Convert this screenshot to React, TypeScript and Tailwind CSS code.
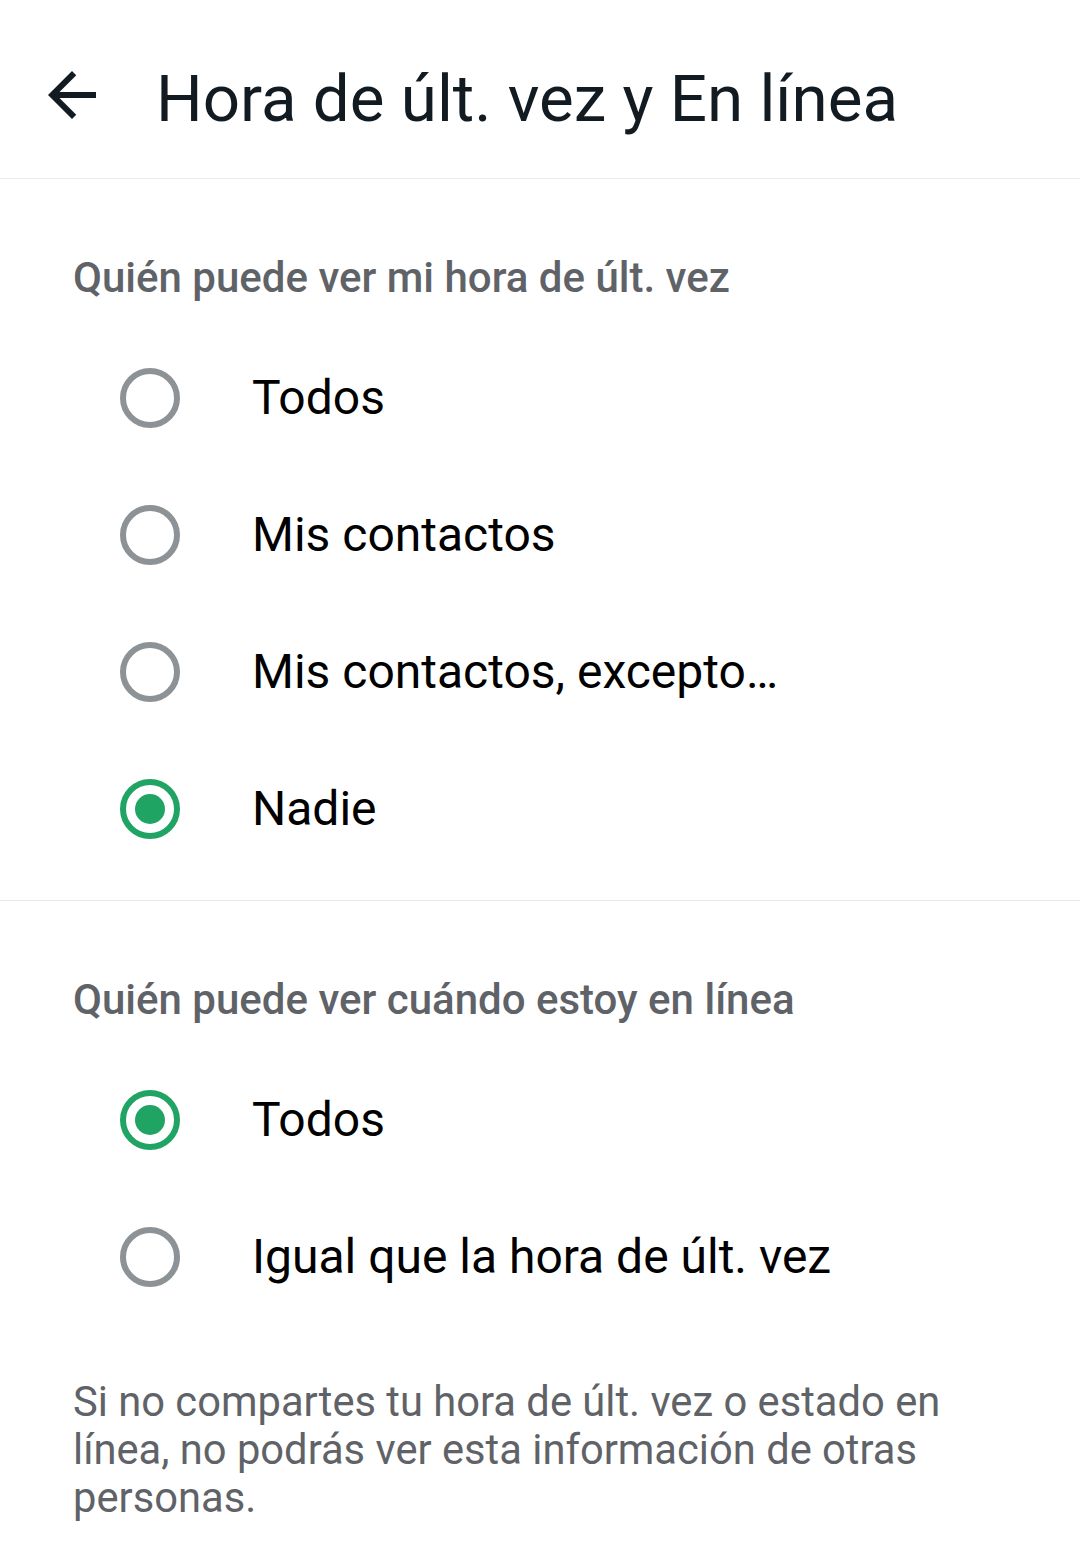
export default function App() {
  const font = { fontFamily: "Roboto, 'Noto Sans', sans-serif" }
  return (
    <div className="w-[1080px] h-[1568px] bg-white overflow-hidden" style={font}>
      {/* header */}
      <div className="h-[179px] flex items-center border-b border-[#e9ebec]">
        <div className="w-[156px] h-full flex items-center pl-[36px] pt-[12px]">
          <svg width="72" height="72" viewBox="0 0 24 24" fill="#111b21">
            <path d="M20 11H7.83l5.59-5.59L12 4l-8 8 8 8 1.41-1.41L7.83 13H20v-2z" />
          </svg>
        </div>
        <h1 className="text-[65.5px] leading-none text-[#111b21] pt-[20px]">Hora de últ. vez y En línea</h1>
      </div>

      <Section
        title="Quién puede ver mi hora de últ. vez"
        options={["Todos", "Mis contactos", "Mis contactos, excepto…", "Nadie"]}
        selected={3}
      />
      <div className="h-px bg-[#e5e7e8]" />
      <Section
        title="Quién puede ver cuándo estoy en línea"
        options={["Todos", "Igual que la hora de últ. vez"]}
        selected={0}
      />

      <p className="px-[73px] pt-[30px] text-[41.7px] leading-[48px] text-[#5f6368]">
        Si no compartes tu hora de últ. vez o estado en línea, no podrás ver esta información de otras personas.
      </p>
    </div>
  )
}

function Section({ title, options, selected }: { title: string; options: string[]; selected: number }) {
  return (
    <div className="pt-[71px] pb-[23px]">
      <h2 className="px-[73px] text-[42px] leading-[56px] font-medium text-[#5f6368] mb-[23px]">{title}</h2>
      {options.map((opt, i) => (
        <div key={opt} className="h-[137px] flex items-center">
          <div className="w-[252px] flex pl-[120px]">
            {i === selected ? (
              <div className="w-[60px] h-[60px] rounded-full border-[6px] border-[#1fa463] flex items-center justify-center">
                <div className="w-[30px] h-[30px] rounded-full bg-[#1fa463]" />
              </div>
            ) : (
              <div className="w-[60px] h-[60px] rounded-full border-[6px] border-[#8c9296]" />
            )}
          </div>
          <span className="text-[48px] leading-none text-black">{opt}</span>
        </div>
      ))}
    </div>
  )
}
